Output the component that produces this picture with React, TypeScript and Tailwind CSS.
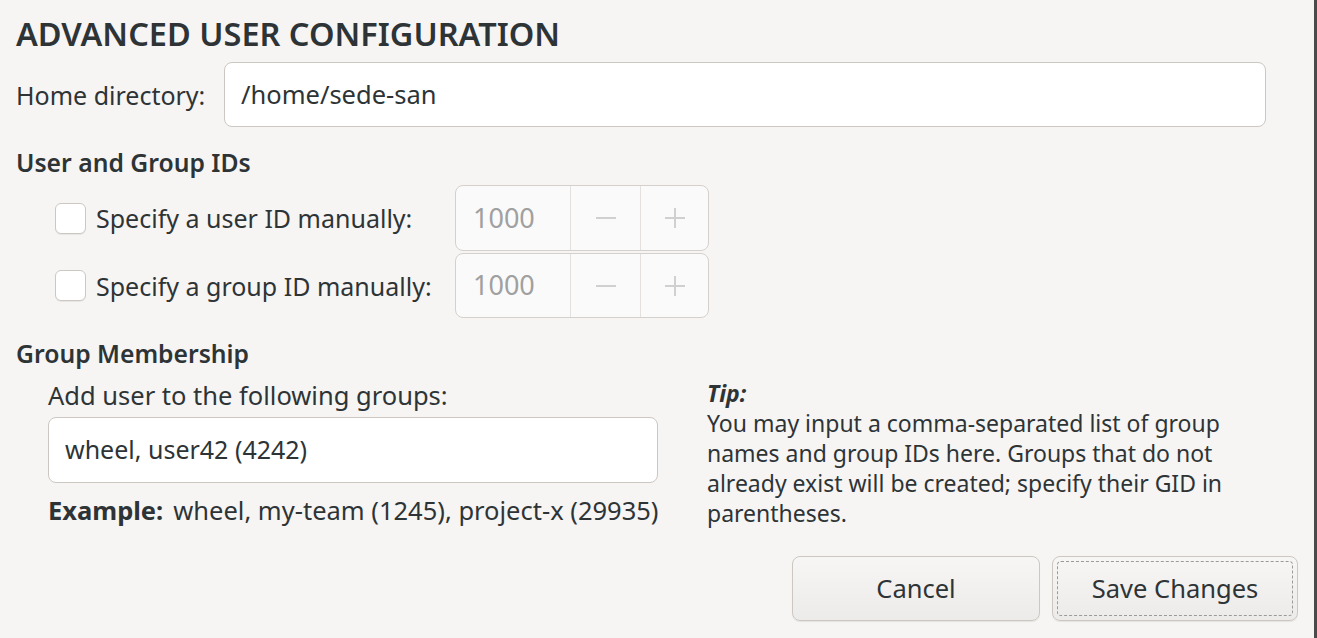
import React from "react";

const font = { fontFamily: '"Noto Sans", "Open Sans", sans-serif' };

function Checkbox() {
  return (
    <div className="w-[31px] h-[31px] rounded-[6px] border border-[#cdc7c2] bg-white shadow-[0_1px_0_rgba(0,0,0,0.06)] shrink-0" />
  );
}

function Spin({ h }: { h: string }) {
  return (
    <div className={`flex ${h} w-[254px] rounded-[8px] border border-[#d5d0cc] bg-[#fafafa]`}>
      <div className="w-[114px] flex items-center pl-[17px] text-[27px] text-[#a0a0a0]">1000</div>
      <div className="w-[70px] flex items-center justify-center border-l border-[#e3e0dd]">
        <svg width="20" height="20" viewBox="0 0 20 20">
          <rect x="0" y="9" width="20" height="2" fill="#d0d0d0" />
        </svg>
      </div>
      <div className="flex-1 flex items-center justify-center border-l border-[#e3e0dd]">
        <svg width="20" height="20" viewBox="0 0 20 20">
          <rect x="0" y="9" width="20" height="2" fill="#d0d0d0" />
          <rect x="9" y="0" width="2" height="20" fill="#d0d0d0" />
        </svg>
      </div>
    </div>
  );
}

export default function App() {
  return (
    <div
      className="w-[1317px] h-[638px] bg-[#f6f5f4] border-r-[3px] border-[#4a4a4a] text-[#2e3436] flex flex-col pl-[16px] overflow-hidden"
      style={font}
    >
      <div className="h-[44px] mt-[12px] flex items-center text-[32.5px] font-semibold">
        ADVANCED USER CONFIGURATION
      </div>
      <div className="mt-[6px] flex items-center">
        <div className="w-[208px] text-[25px] leading-[30px]">Home directory:</div>
        <div className="w-[1042px] h-[65px] rounded-[8px] border border-[#cdc7c2] bg-white flex items-center pl-[16px] text-[25.5px]">
          /home/sede-san
        </div>
      </div>
      <div className="mt-[21px] h-[30px] flex items-center text-[24.7px] font-semibold">
        User and Group IDs
      </div>
      <div className="mt-[7px] ml-[39px] flex flex-col gap-[2px]">
        <div className="flex items-center">
          <div className="w-[400px] flex items-center gap-[10px]">
            <Checkbox />
            <span className="text-[25px] leading-[30px]">Specify a user ID manually:</span>
          </div>
          <Spin h="h-[66px]" />
        </div>
        <div className="flex items-center">
          <div className="w-[400px] flex items-center gap-[10px]">
            <Checkbox />
            <span className="text-[25px] leading-[30px]">Specify a group ID manually:</span>
          </div>
          <Spin h="h-[65px]" />
        </div>
      </div>
      <div className="mt-[21px] h-[30px] flex items-center text-[24.7px] font-semibold">
        Group Membership
      </div>
      <div className="flex">
        <div className="ml-[32px] w-[610px] flex flex-col">
          <div className="mt-[11px] h-[30px] flex items-center text-[25.5px]">
            Add user to the following groups:
          </div>
          <div className="mt-[7px] h-[66px] rounded-[8px] border border-[#cdc7c2] bg-white flex items-center pl-[16px] text-[25px]">
            wheel, user42 (4242)
          </div>
          <div className="mt-[12px] h-[30px] flex items-center text-[25.5px] whitespace-nowrap">
            <span className="font-bold mr-[10px]">Example:</span>
            <span>wheel, my-team (1245), project-x (29935)</span>
          </div>
        </div>
        <div className="ml-[49px] w-[540px] mt-[9px] text-[23px] leading-[30px]">
          <div className="italic font-bold">Tip:</div>
          <div>
            You may input a comma-separated list of group names and group IDs here. Groups that do not
            already exist will be created; specify their GID in parentheses.
          </div>
        </div>
      </div>
      <div className="mt-auto mb-[17px] flex justify-end gap-[12px] pr-[16px]">
        <button className="w-[248px] h-[65px] rounded-[8px] border border-[#cdc7c2] bg-gradient-to-b from-[#f7f6f5] to-[#edebe9] text-[25.5px] text-[#2e3436] shadow-[0_1px_1px_rgba(0,0,0,0.07)]">
          Cancel
        </button>
        <button className="w-[246px] h-[65px] rounded-[8px] border border-[#cdc7c2] bg-gradient-to-b from-[#f7f6f5] to-[#edebe9] text-[25.5px] text-[#2e3436] p-[4px] shadow-[0_1px_1px_rgba(0,0,0,0.07)]">
          <div className="w-full h-full rounded-[4px] border border-dashed border-[#9a9a9a] flex items-center justify-center">
            Save Changes
          </div>
        </button>
      </div>
    </div>
  );
}
